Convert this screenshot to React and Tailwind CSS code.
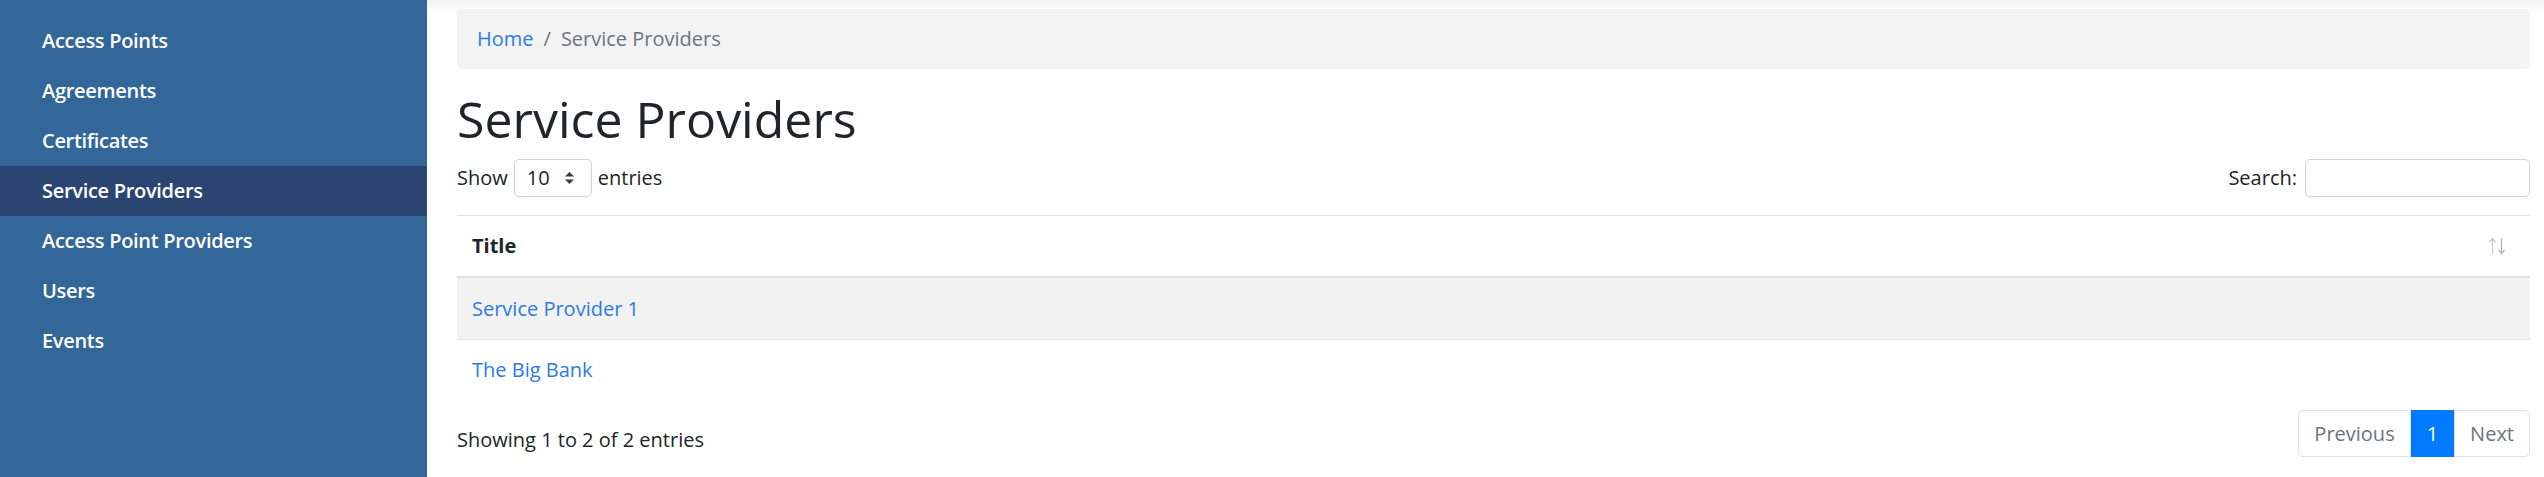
import React from "react";

const navItems = [
  "Access Points",
  "Agreements",
  "Certificates",
  "Service Providers",
  "Access Point Providers",
  "Users",
  "Events",
];

const rows = ["Service Provider 1", "The Big Bank"];

const SortIcon = () => (
  <svg width="18" height="18" viewBox="0 0 18 18" fill="none" stroke="#c4c4c4" strokeWidth="1.2">
    {/* up arrow */}
    <path d="M4.5 17V2" />
    <path d="M1.5 5L4.5 1.5L7.5 5" />
    {/* down arrow */}
    <path d="M13.5 1V16" stroke="#b0b0b0" />
    <path d="M10.5 13L13.5 16.5L16.5 13" stroke="#b0b0b0" />
  </svg>
);

const SelectArrows = () => (
  <svg width="11" height="14" viewBox="0 0 11 14" fill="#343a40">
    <path d="M1 5.5L5.5 1L10 5.5Z" />
    <path d="M1 8.5L5.5 13L10 8.5Z" />
  </svg>
);

export default function App() {
  return (
    <div className="flex w-[2544px] h-[477px] overflow-hidden bg-white font-['Open_Sans',sans-serif] text-[20px] leading-[30px] text-[#212529]">
      {/* sidebar */}
      <aside className="w-[427px] shrink-0 bg-[#336699] pt-[16px]">
        <ul>
          {navItems.map((item) => (
            <li
              key={item}
              className={
                "h-[50px] flex items-center pl-[42px] font-semibold text-white tracking-[-0.3px] " +
                (item === "Service Providers" ? "bg-[#2a4571]" : "")
              }
            >
              {item}
            </li>
          ))}
        </ul>
      </aside>

      {/* main content */}
      <main className="flex-1 pl-[30px] pr-[14px] pt-[9px] bg-[linear-gradient(#f3f3f3,#ffffff_16px)]">
        {/* breadcrumb */}
        <nav className="h-[60px] rounded-[5px] bg-[#f3f3f3] px-[20px] flex items-center">
          <a className="text-[#2c7be5]">Home</a>
          <span className="px-[10px] text-[#6c757d]">/</span>
          <span className="text-[#6c757d]">Service Providers</span>
        </nav>

        <h1 className="mt-[20px] mb-[10px] text-[50px] leading-[60px] font-normal">Service Providers</h1>

        {/* controls */}
        <div className="flex items-center justify-between h-[38px]">
          <div className="flex items-center">
            <span>Show</span>
            <div className="mx-[6px] w-[78px] h-[38px] border border-[#ced4da] rounded-[5px] flex items-center justify-between pl-[12px] pr-[16px]">
              <span>10</span>
              <SelectArrows />
            </div>
            <span>entries</span>
          </div>
          <div className="flex items-center">
            <span>Search:</span>
            <div className="ml-[8px] w-[225px] h-[38px] border border-[#ced4da] rounded-[5px]" />
          </div>
        </div>

        {/* table */}
        <table className="mt-[18px] w-full border-collapse">
          <thead>
            <tr className="border-t border-[#dee2e6] border-b-2 border-b-[#dee2e6]">
              <th className="text-left font-bold px-[15px] py-[15px]">
                <div className="flex items-center justify-between">
                  <span>Title</span>
                  <span className="mr-[9px]">
                    <SortIcon />
                  </span>
                </div>
              </th>
            </tr>
          </thead>
          <tbody>
            {rows.map((r, i) => (
              <tr key={r} className={i % 2 === 0 ? "bg-[#f2f2f2]" : "border-t border-[#dee2e6]"}>
                <td className={"px-[15px] " + (i === 0 ? "pt-[16px] pb-[15px]" : "py-[15px]")}>
                  <a className="text-[#2c7be5]">{r}</a>
                </td>
              </tr>
            ))}
          </tbody>
        </table>

        {/* footer */}
        <div className="mt-[10px] flex items-start justify-between">
          <div className="pt-[15px]">Showing 1 to 2 of 2 entries</div>
          <ul className="flex leading-[25px]">
            <li className="px-[15px] py-[10px] border border-[#dee2e6] rounded-l-[5px] text-[#6c757d]">Previous</li>
            <li className="px-[15px] py-[10px] border border-[#007bff] bg-[#007bff] text-white">1</li>
            <li className="px-[15px] py-[10px] border border-[#dee2e6] rounded-r-[5px] text-[#6c757d]">Next</li>
          </ul>
        </div>
      </main>
    </div>
  );
}
